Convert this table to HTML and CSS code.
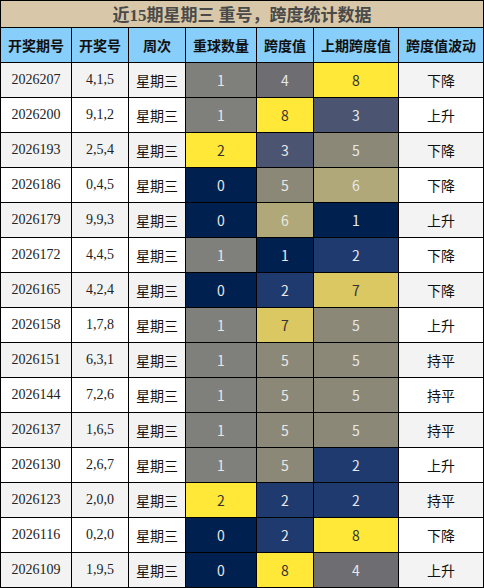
FILE: index.html
```html
<!DOCTYPE html>
<html lang="zh-CN">
<head>
  <meta charset="UTF-8" />
  <title>近15期星期三 重号，跨度统计数据</title>
  <link rel="stylesheet" href="styles.css">
</head>
<body>
  <table class="stats">
    <colgroup>
      <col class="c-wide"><col class="c-narrow"><col class="c-narrow"><col class="c-wide">
      <col class="c-narrow"><col class="c-big"><col class="c-big">
    </colgroup>
    <thead>
      <tr class="title-row"><th colspan="7">近<span class="num">15</span>期星期三 重号，跨度统计数据</th></tr>
      <tr class="head-row">
        <th>开奖期号</th><th>开奖号</th><th>周次</th><th>重球数量</th><th>跨度值</th><th>上期跨度值</th><th>跨度值波动</th>
      </tr>
    </thead>
    <tbody>
      <tr><td class="num">2026207</td><td class="num">4,1,5</td><td>星期三</td><td class="k-gray">1</td><td class="k-dgray">4</td><td class="k-yellow">8</td><td>下降</td></tr>
      <tr><td class="num">2026200</td><td class="num">9,1,2</td><td>星期三</td><td class="k-gray">1</td><td class="k-yellow">8</td><td class="k-slate">3</td><td>上升</td></tr>
      <tr><td class="num">2026193</td><td class="num">2,5,4</td><td>星期三</td><td class="k-yellow">2</td><td class="k-slate">3</td><td class="k-taupe">5</td><td>下降</td></tr>
      <tr><td class="num">2026186</td><td class="num">0,4,5</td><td>星期三</td><td class="k-navy">0</td><td class="k-taupe">5</td><td class="k-khaki">6</td><td>下降</td></tr>
      <tr><td class="num">2026179</td><td class="num">9,9,3</td><td>星期三</td><td class="k-navy">0</td><td class="k-khaki">6</td><td class="k-navy">1</td><td>上升</td></tr>
      <tr><td class="num">2026172</td><td class="num">4,4,5</td><td>星期三</td><td class="k-gray">1</td><td class="k-navy">1</td><td class="k-blue">2</td><td>下降</td></tr>
      <tr><td class="num">2026165</td><td class="num">4,2,4</td><td>星期三</td><td class="k-navy">0</td><td class="k-blue">2</td><td class="k-gold">7</td><td>下降</td></tr>
      <tr><td class="num">2026158</td><td class="num">1,7,8</td><td>星期三</td><td class="k-gray">1</td><td class="k-gold">7</td><td class="k-taupe">5</td><td>上升</td></tr>
      <tr><td class="num">2026151</td><td class="num">6,3,1</td><td>星期三</td><td class="k-gray">1</td><td class="k-taupe">5</td><td class="k-taupe">5</td><td>持平</td></tr>
      <tr><td class="num">2026144</td><td class="num">7,2,6</td><td>星期三</td><td class="k-gray">1</td><td class="k-taupe">5</td><td class="k-taupe">5</td><td>持平</td></tr>
      <tr><td class="num">2026137</td><td class="num">1,6,5</td><td>星期三</td><td class="k-gray">1</td><td class="k-taupe">5</td><td class="k-taupe">5</td><td>持平</td></tr>
      <tr><td class="num">2026130</td><td class="num">2,6,7</td><td>星期三</td><td class="k-gray">1</td><td class="k-taupe">5</td><td class="k-blue">2</td><td>上升</td></tr>
      <tr><td class="num">2026123</td><td class="num">2,0,0</td><td>星期三</td><td class="k-yellow">2</td><td class="k-blue">2</td><td class="k-blue">2</td><td>持平</td></tr>
      <tr><td class="num">2026116</td><td class="num">0,2,0</td><td>星期三</td><td class="k-navy">0</td><td class="k-blue">2</td><td class="k-yellow">8</td><td>下降</td></tr>
      <tr><td class="num">2026109</td><td class="num">1,9,5</td><td>星期三</td><td class="k-navy">0</td><td class="k-yellow">8</td><td class="k-dgray">4</td><td>上升</td></tr>
    </tbody>
  </table>
</body>
</html>
```

FILE: styles.css
```css
* { margin: 0; padding: 0; box-sizing: border-box; }

body {
  background: #fff;
  font-family: "Noto Sans CJK SC", "Noto Sans", sans-serif;
  color: #111;
}

.stats {
  width: 484px;
  table-layout: fixed;
  border-collapse: collapse;
  border: 1px solid #000;
}

.c-wide { width: 71px; }
.c-narrow { width: 57px; }
.c-big { width: 85px; }

.stats th,
.stats td {
  border: 1px solid #000;
  text-align: center;
  vertical-align: middle;
  white-space: nowrap;
}

.title-row th {
  height: 27px;
  background: #d8c8a9;
  color: #4a4a4a;
  font-size: 17px;
  font-weight: bold;
  line-height: 1;
}

.title-row .num {
  font-family: "Liberation Serif", serif;
}

.head-row th {
  height: 35px;
  background: #87cefa;
  color: #111;
  font-size: 14px;
  font-weight: bold;
}

.stats td {
  height: 35px;
  font-size: 14px;
  line-height: 1;
}

.stats tbody tr:nth-child(odd) td { background: #f3f3f3; }
.stats tbody tr:nth-child(even) td { background: #fff; }

.stats td.num {
  font-family: "Liberation Serif", serif;
  font-size: 14px;
  color: #222;
}

/* value cells */
.stats td[class^="k-"] { color: #e8e8e8; font-size: 14px; }
.stats tbody tr td.k-gray { background: #7f7f7b; }
.stats tbody tr td.k-dgray { background: #6d6d72; }
.stats tbody tr td.k-yellow { background: #ffe838; color: #333; }
.stats tbody tr td.k-gold { background: #dcc862; color: #333; }
.stats tbody tr td.k-slate { background: #4b5470; }
.stats tbody tr td.k-taupe { background: #8c8878; }
.stats tbody tr td.k-khaki { background: #b0a878; }
.stats tbody tr td.k-navy { background: #00214f; }
.stats tbody tr td.k-blue { background: #1f3a6e; }
```
